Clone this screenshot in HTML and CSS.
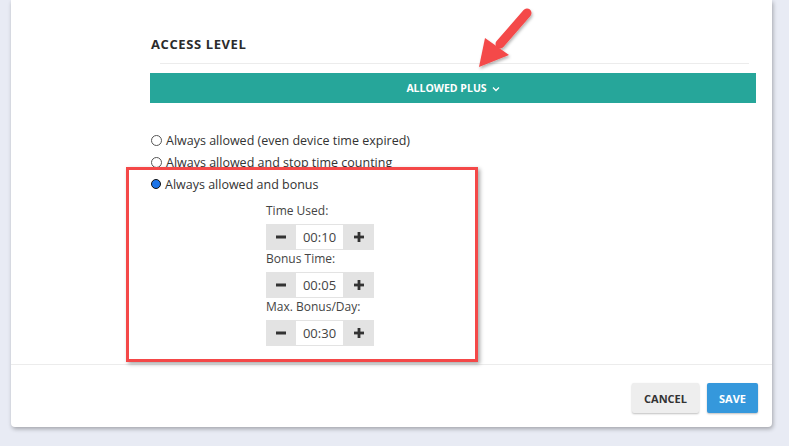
FILE: index.html
```html
<!DOCTYPE html>
<html>
<head>
<meta charset="utf-8">
<link rel="stylesheet" href="styles.css">
</head>
<body>
<div class="card">
  <div class="body">
    <div class="title">ACCESS LEVEL</div>
    <div class="sep"></div>
    <div class="bar">ALLOWED PLUS <svg class="chev" width="8" height="6" viewBox="0 0 8 6"><path d="M1 1.5 L4 4.5 L7 1.5" fill="none" stroke="#fff" stroke-width="1.3"/></svg></div>
    <div class="radios">
      <label class="radio"><span class="dot"></span>Always allowed (even device time expired)</label>
      <label class="radio"><span class="dot"></span>Always allowed and stop time counting</label>
      <label class="radio"><span class="dot on"></span>Always allowed and bonus</label>
    </div>
    <div class="opts">
      <div class="lbl">Time Used:</div>
      <div class="stepper"><span class="btn"><svg width="12" height="12" viewBox="0 0 12 12"><rect x="1" y="4.5" width="10" height="3" fill="#333"/></svg></span><span class="val">00:10</span><span class="btn"><svg width="12" height="12" viewBox="0 0 12 12"><rect x="1" y="4.6" width="10" height="2.8" fill="#333"/><rect x="4.6" y="1" width="2.8" height="10" fill="#333"/></svg></span></div>
      <div class="lbl">Bonus Time:</div>
      <div class="stepper"><span class="btn"><svg width="12" height="12" viewBox="0 0 12 12"><rect x="1" y="4.5" width="10" height="3" fill="#333"/></svg></span><span class="val">00:05</span><span class="btn"><svg width="12" height="12" viewBox="0 0 12 12"><rect x="1" y="4.6" width="10" height="2.8" fill="#333"/><rect x="4.6" y="1" width="2.8" height="10" fill="#333"/></svg></span></div>
      <div class="lbl">Max. Bonus/Day:</div>
      <div class="stepper"><span class="btn"><svg width="12" height="12" viewBox="0 0 12 12"><rect x="1" y="4.5" width="10" height="3" fill="#333"/></svg></span><span class="val">00:30</span><span class="btn"><svg width="12" height="12" viewBox="0 0 12 12"><rect x="1" y="4.6" width="10" height="2.8" fill="#333"/><rect x="4.6" y="1" width="2.8" height="10" fill="#333"/></svg></span></div>
    </div>
  </div>
  <div class="footer">
    <button class="b cancel">CANCEL</button>
    <button class="b save">SAVE</button>
  </div>
  <div class="redbox"></div>
  <svg class="arrow" width="100" height="80" viewBox="0 0 100 80">
    <defs>
      <filter id="sh" x="-30%" y="-30%" width="160%" height="160%">
        <feDropShadow dx="1" dy="2" stdDeviation="1.5" flood-color="#000" flood-opacity="0.3"/>
      </filter>
    </defs>
    <g filter="url(#sh)">
      <line x1="74" y1="13" x2="47" y2="44" stroke="#f44848" stroke-width="9" stroke-linecap="round"/>
      <polygon points="26,67 32,38 56,55" fill="#f44848"/>
    </g>
  </svg>
</div>
</body>
</html>
```
FILE: styles.css
```css
html, body {
  margin: 0;
  padding: 0;
}
body {
  background: #e8ebf4;
  font-family: "Open Sans", "Noto Sans", sans-serif;
  color: #333;
  width: 789px;
  height: 446px;
  overflow: hidden;
}
.card {
  position: relative;
  margin-left: 11px;
  width: 761px;
  background: #fff;
  border-radius: 0 0 4px 4px;
  box-shadow: 1px 2px 4px rgba(0, 0, 0, 0.3);
}
.body {
  padding: 36px 16px 0 139px;
}
.title {
  font-size: 13px;
  font-weight: 700;
  line-height: 16px;
  letter-spacing: 0.6px;
  color: #2b2b2b;
  padding-left: 1px;
}
.sep {
  margin: 11px 7px 0 10px;
  height: 0;
  border-top: 1px solid #ececec;
}
.bar {
  margin-top: 9px;
  height: 30px;
  background: #26a69a;
  color: #fff;
  font-size: 10.5px;
  font-weight: 700;
  display: flex;
  align-items: center;
  justify-content: center;
  gap: 5px;
}
.chev {
  margin-top: 1px;
}
.radios {
  margin-top: 26px;
  display: flex;
  flex-direction: column;
}
.radio {
  display: flex;
  align-items: center;
  height: 22px;
  font-size: 12.5px;
  color: #333;
}
.dot {
  width: 9px;
  height: 9px;
  border: 1px solid #555;
  border-radius: 50%;
  background: #fff;
  margin: 0 4px 0 1px;
  box-sizing: content-box;
}
.dot.on {
  width: 8px;
  height: 8px;
  border: 1.5px solid #111;
  background: #1a73e8;
}
.opts {
  margin: 7px 0 0 116px;
  padding-bottom: 18px;
}
.lbl {
  font-size: 12px;
  line-height: 18px;
  margin-bottom: 4px;
  color: #444;
}
.stepper {
  display: flex;
  width: 108px;
  height: 26px;
  background: #e3e3e3;
}
.btn {
  width: 30px;
  display: flex;
  align-items: center;
  justify-content: center;
}
.btn:last-child {
  width: 31px;
}
.val {
  width: 47px;
  margin: 1px 0;
  background: #fff;
  font-size: 13px;
  color: #444;
  display: flex;
  align-items: center;
  justify-content: center;
}
.footer {
  border-top: 1px solid #ececec;
  display: flex;
  justify-content: flex-end;
  gap: 8px;
  padding: 18px 14px 14px 0;
}
.b {
  height: 30px;
  border: none;
  border-radius: 2px;
  font-family: "Open Sans", "Noto Sans", sans-serif;
  font-size: 11px;
  font-weight: 700;
  padding: 0;
  box-shadow: 0 1px 2px rgba(0, 0, 0, 0.25);
}
.cancel {
  width: 67px;
  background: #eeeeee;
  color: #333;
}
.save {
  width: 51px;
  background: #3598dc;
  color: #fff;
}
.redbox {
  position: absolute;
  left: 115px;
  top: 167px;
  width: 346px;
  height: 189px;
  border: 3px solid #f44848;
  box-shadow: 2px 2px 4px rgba(0, 0, 0, 0.35);
}
.arrow {
  position: absolute;
  left: 442px;
  top: 0;
}
```
